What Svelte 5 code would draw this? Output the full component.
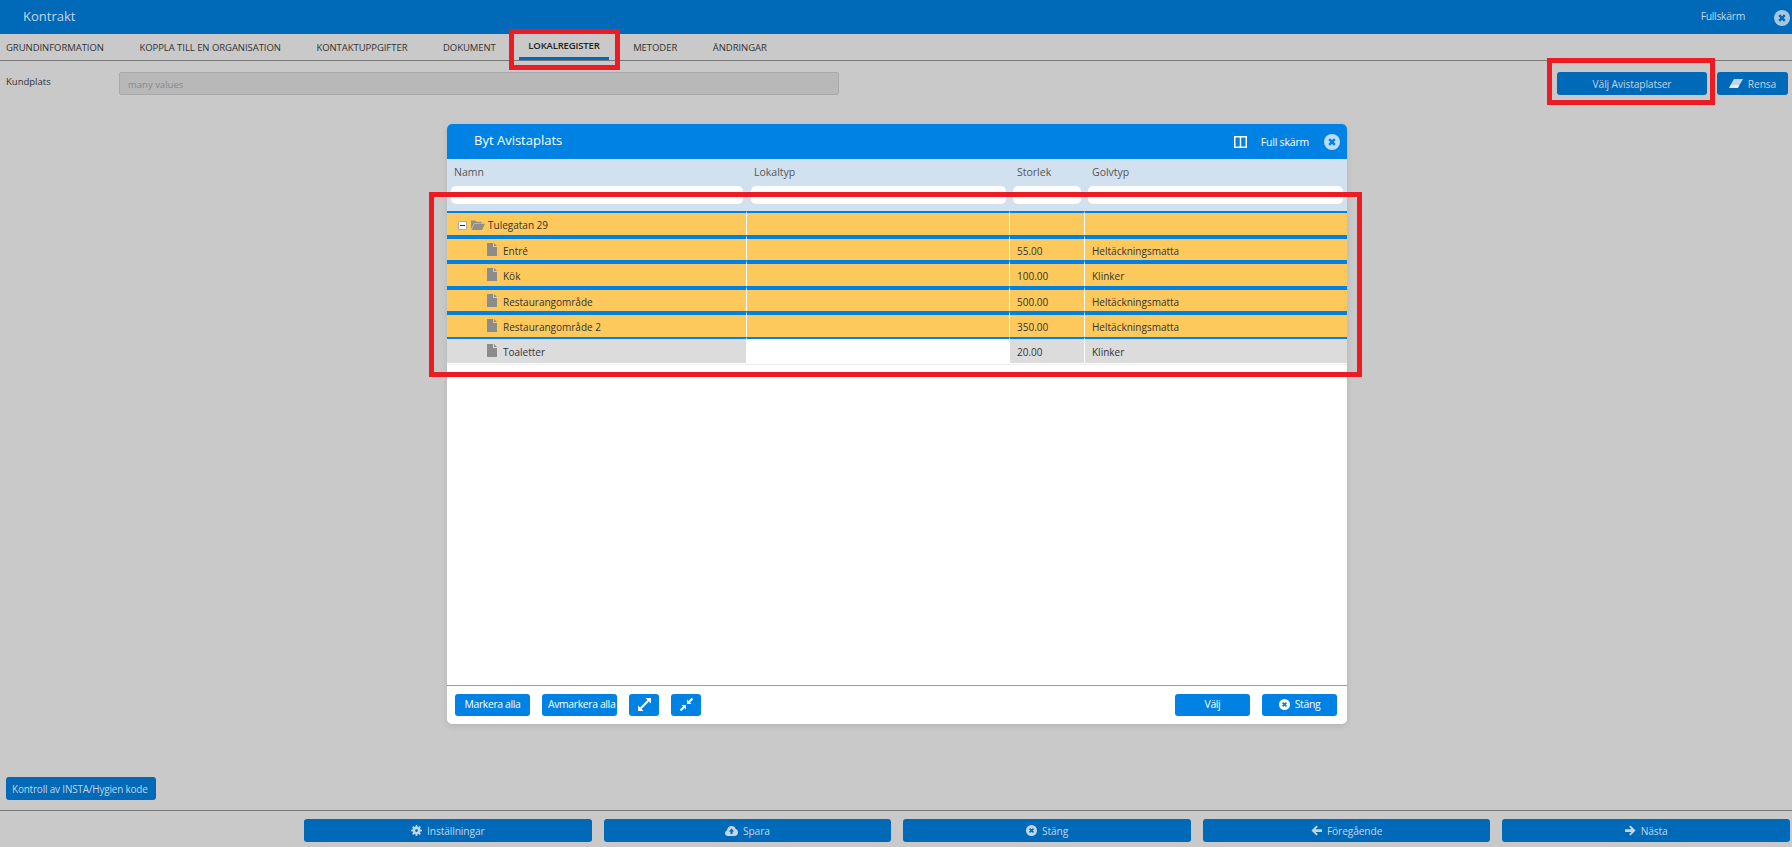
<script>
  const tabs = [
    "GRUNDINFORMATION",
    "KOPPLA TILL EN ORGANISATION",
    "KONTAKTUPPGIFTER",
    "DOKUMENT",
    "LOKALREGISTER",
    "METODER",
    "ÄNDRINGAR"
  ];

  const rows = [
    { name: "Entré", size: "55.00", floor: "Heltäckningsmatta" },
    { name: "Kök", size: "100.00", floor: "Klinker" },
    { name: "Restaurangområde", size: "500.00", floor: "Heltäckningsmatta" },
    { name: "Restaurangområde 2", size: "350.00", floor: "Heltäckningsmatta" }
  ];
</script>

{#snippet closeIcon(size, bg, fg)}
  <svg width={size} height={size} viewBox="0 0 16 16" class="icon close-icon">
    <circle cx="8" cy="8" r="8" fill={bg} />
    <path d="M5.2 5.2l5.6 5.6M10.8 5.2l-5.6 5.6" stroke={fg} stroke-width="2.4" />
  </svg>
{/snippet}

{#snippet fileIcon()}
  <svg width="10" height="13" viewBox="0 0 10 13" class="file-icon">
    <path d="M0 0h6v4h4v9H0z" fill="#8c8c8c" />
    <path d="M7 0l3 3H7z" fill="#8c8c8c" />
  </svg>
{/snippet}

<div class="page">
  <header class="topbar">
    <span class="title">Kontrakt</span>
    <span class="fullscreen">Fullskärm</span>
    {@render closeIcon(16, "#a9c6df", "#0069b8")}
  </header>

  <nav class="tabs">
    {#each tabs as tab, i}
      <span class="tab" class:active={i === 4}>{tab}</span>
    {/each}
  </nav>

  <div class="field-row">
    <span class="field-label">Kundplats</span>
    <div class="field-input">many values</div>
    <button class="btn btn-pick">Välj Avistaplatser</button>
    <button class="btn btn-clear">
      <svg width="14" height="9" viewBox="0 0 14 9" class="icon">
        <path d="M5 0h9l-3.500 6H1.500z" fill="#c3d6e8" />
        <path d="M1.500 6h9L9 9H0z" fill="#e3ecf4" />
      </svg>
      Rensa
    </button>
  </div>

  <div class="spacer">
    <button class="btn btn-check">Kontroll av INSTA/Hygien kode</button>
  </div>

  <footer class="actions">
    <button class="btn">
      <svg width="11" height="11" viewBox="0 0 12 12" class="icon">
        <circle cx="6" cy="6" r="3.2" fill="none" stroke="#c3d6e8" stroke-width="2.4" />
        <path d="M6 0v12M0 6h12M1.8 1.8l8.4 8.4M10.2 1.8l-8.4 8.4" stroke="#c3d6e8" stroke-width="1.8" />
        <circle cx="6" cy="6" r="1.5" fill="#0069b8" />
      </svg>
      Inställningar
    </button>
    <button class="btn">
      <svg width="13" height="11" viewBox="0 0 13 11" class="icon">
        <path d="M3 11C1.3 11 0 9.8 0 8.2 0 6.9.8 5.9 2 5.6 2.1 3.4 3.9 1 6.6 1c2 0 3.6 1.300 4.100 3.100 1.300.4 2.300 1.500 2.300 3.100C13 9.300 11.500 11 9.500 11z" fill="#c3d6e8" />
        <path d="M6.500 3.500L3.800 6.500h1.700V9h2V6.500h1.700z" fill="#0069b8" />
      </svg>
      Spara
    </button>
    <button class="btn">
      {@render closeIcon(11, "#c3d6e8", "#0069b8")}
      Stäng
    </button>
    <button class="btn">
      <svg width="11" height="11" viewBox="0 0 12 12" class="icon">
        <path d="M6 0.500L0.500 6 6 11.500 7.500 10 5 7.500h7v-3H5L7.500 2z" fill="#c3d6e8" />
      </svg>
      Föregående
    </button>
    <button class="btn">
      <svg width="11" height="11" viewBox="0 0 12 12" class="icon">
        <path d="M6 0.500L11.500 6 6 11.500 4.500 10 7 7.500H0v-3h7L4.500 2z" fill="#c3d6e8" />
      </svg>
      Nästa
    </button>
  </footer>

  <section class="modal">
    <div class="modal-head">
      <span class="modal-title">Byt Avistaplats</span>
      <svg width="13" height="12" viewBox="0 0 13 12" class="icon columns-icon">
        <path d="M.75.75h11.500v10.500H.75zM6.500.75v10.500" fill="none" stroke="#fff" stroke-width="1.500" />
      </svg>
      <span class="modal-full">Full skärm</span>
      {@render closeIcon(16, "#b9dcf7", "#0082e4")}
    </div>

    <div class="grid-head">
      <div class="cols labels">
        <span>Namn</span>
        <span>Lokaltyp</span>
        <span>Storlek</span>
        <span>Golvtyp</span>
      </div>
      <div class="filters">
        <div class="filter"></div>
        <div class="filter"></div>
        <div class="filter"></div>
        <div class="filter"></div>
      </div>
    </div>

    <div class="grid-body">
      <div class="cols row selected first">
        <div class="cell name">
          <span class="toggle"></span>
          <svg width="14" height="10" viewBox="0 0 16 11" preserveAspectRatio="none" class="folder-icon">
            <path d="M0 10V1.500C0 1 .4.500 1 .500h3.500L6 2h6v1.500H3.500L0 10z" fill="#8f8f8f" />
            <path d="M3.800 4.200H16L12.500 11H.6z" fill="#8f8f8f" />
          </svg>
          Tulegatan 29
        </div>
        <div class="cell"></div>
        <div class="cell"></div>
        <div class="cell"></div>
      </div>
      {#each rows as row}
        <div class="cols row selected">
          <div class="cell leaf">{@render fileIcon()}{row.name}</div>
          <div class="cell"></div>
          <div class="cell">{row.size}</div>
          <div class="cell">{row.floor}</div>
        </div>
      {/each}
      <div class="cols row plain last">
        <div class="cell leaf">{@render fileIcon()}Toaletter</div>
        <div class="cell empty"></div>
        <div class="cell">20.00</div>
        <div class="cell">Klinker</div>
      </div>
    </div>

    <div class="modal-foot">
      <button class="mbtn">Markera alla</button>
      <button class="mbtn clip">Avmarkera alla</button>
      <button class="mbtn small" aria-label="Expandera">
        <svg width="13" height="13" viewBox="0 0 13 13">
          <path d="M13 0v5.500L7.500 0zM0 13V7.500L5.500 13z" fill="#fff" />
          <path d="M10.200 2.800l-7.400 7.400" stroke="#fff" stroke-width="2.200" />
        </svg>
      </button>
      <button class="mbtn small" aria-label="Komprimera">
        <svg width="13" height="13" viewBox="0 0 13 13">
          <path d="M7 6V1.500L11.500 6zM6 7v4.500L1.500 7z" fill="#fff" />
          <path d="M9 4l3.500-3.500M4 9L.5 12.500" stroke="#fff" stroke-width="2.200" />
        </svg>
      </button>
      <span class="foot-gap"></span>
      <button class="mbtn">Välj</button>
      <button class="mbtn">
        {@render closeIcon(11, "#fff", "#0082e4")}
        Stäng
      </button>
    </div>
  </section>

  <div class="mark mark-tab"></div>
  <div class="mark mark-pick"></div>
  <div class="mark mark-table"></div>
</div>

<style>
  :global(body) {
    margin: 0;
    font-family: "Open Sans", "Noto Sans", sans-serif;
    color: #333;
  }

  .page {
    position: relative;
    display: flex;
    flex-direction: column;
    height: 847px;
    overflow: hidden;
    background: #c8c9c8;
  }

  .icon {
    flex: none;
    vertical-align: middle;
  }

  .btn {
    display: flex;
    flex: none;
    align-items: center;
    justify-content: center;
    gap: 5px;
    height: 23px;
    padding: 0;
    border: 0;
    border-radius: 3px;
    background: #0069b8;
    color: #c3d6e8;
    font: inherit;
    font-size: 10.2px;
    letter-spacing: -0.1px;
    white-space: nowrap;
  }

  .topbar {
    display: flex;
    align-items: center;
    flex: none;
    height: 34px;
    box-sizing: border-box;
    padding: 0 2px 2px 23px;
    background: #0069b8;
    color: #c3d6e8;
  }

  .title {
    flex: 1;
    font-size: 13px;
  }

  .fullscreen {
    margin-right: 29px;
    font-size: 10.4px;
    letter-spacing: -0.3px;
  }

  .topbar .close-icon {
    margin-top: 4px;
  }

  .tabs {
    display: flex;
    flex: none;
    gap: 35.5px;
    height: 26px;
    padding-left: 6px;
    border-bottom: 1px solid #777;
    font-size: 9.5px;
    letter-spacing: -0.05px;
    line-height: 27px;
  }

  .tab {
    white-space: nowrap;
  }

  .tab.active {
    margin-top: -2px;
    height: 28px;
    box-sizing: border-box;
    padding: 0 9px;
    margin-left: -12px;
    margin-right: -11px;
    border-bottom: 3px solid #0069b8;
    font-weight: 600;
    letter-spacing: -0.15px;
    color: #222;
  }

  .field-row {
    display: flex;
    align-items: flex-start;
    flex: none;
    padding: 11px 4px 0 6px;
  }

  .field-label {
    flex: none;
    width: 113px;
    font-size: 9.5px;
    line-height: 20px;
  }

  .field-input {
    flex: none;
    width: 720px;
    height: 23px;
    box-sizing: border-box;
    border: 1px solid #a9a9a9;
    border-radius: 2px;
    padding-left: 8px;
    background: #b8b8b8;
    color: #888;
    font-size: 9.5px;
    line-height: 23px;
  }

  .btn-pick {
    width: 150px;
    margin-left: 718px;
  }

  .btn-clear {
    width: 71px;
    margin-left: 10px;
  }

  .spacer {
    display: flex;
    align-items: flex-end;
    flex: 1;
    padding: 0 0 10px 6px;
    border-bottom: 1px solid #777;
  }

  .btn-check {
    width: 150px;
    justify-content: flex-start;
    padding-left: 6px;
    font-size: 9.9px;
    letter-spacing: -0.15px;
  }

  .actions {
    display: grid;
    flex: none;
    grid-template-columns: repeat(5, 1fr);
    gap: 12px;
    height: 36px;
    box-sizing: border-box;
    padding: 8px 2px 5px 304px;
  }

  .modal {
    position: absolute;
    top: 124px;
    left: 447px;
    display: flex;
    flex-direction: column;
    width: 900px;
    height: 600px;
    border-radius: 5px;
    background: #fff;
    box-shadow: 0 2px 6px rgba(0, 0, 0, 0.1);
    overflow: hidden;
  }

  .modal-head {
    display: flex;
    align-items: center;
    flex: none;
    height: 35px;
    padding: 0 7px 0 27px;
    background: #0082e4;
    color: #fff;
  }

  .modal-title {
    flex: 1;
    margin-top: -3px;
    font-size: 13px;
  }

  .columns-icon {
    margin-right: 14px;
  }

  .modal-full {
    margin-right: 15px;
    font-size: 10.5px;
    letter-spacing: -0.2px;
  }

  .cols {
    display: grid;
    grid-template-columns: 300px 263px 75px 262px;
  }

  .grid-head {
    flex: none;
    height: 52px;
    background: #d2e1ef;
  }

  .labels {
    height: 27px;
    color: #555;
    font-size: 10.5px;
    line-height: 26px;
  }

  .labels span {
    padding-left: 7px;
  }

  .filters {
    display: grid;
    grid-template-columns: 292px 256px 68px 255px;
    column-gap: 7px;
    padding-left: 4px;
  }

  .filter {
    height: 18px;
    border-radius: 5px;
    background: #fff;
  }

  .filter:nth-child(2) {
    margin-left: 1px;
  }

  .grid-body {
    flex: none;
    height: 153px;
    border-bottom: 1px solid #eee;
    color: #333;
    font-size: 10px;
  }

  .row:nth-child(even) {
    height: 25px;
  }

  .row:nth-child(odd) {
    height: 26px;
  }

  .row.first {
    height: 24px;
  }

  .row.last {
    height: 26px;
  }

  .cell {
    display: flex;
    align-items: center;
    box-sizing: border-box;
    height: 100%;
    padding-top: 2px;
    padding-left: 7px;
    border-top: 4px solid #0082e4;
    border-right: 1px solid #fff;
    white-space: nowrap;
  }

  .cell:last-child {
    border-right: 0;
  }

  .first .cell,
  .last .cell {
    border-top-width: 2px;
  }

  .selected .cell {
    background: #fec95c;
  }

  .plain .cell {
    background: #dcdcdc;
  }

  .plain .cell.empty {
    background: #fff;
  }

  .cell.name {
    padding-left: 11px;
  }

  .cell.leaf {
    padding-left: 40px;
  }

  .toggle {
    position: relative;
    box-sizing: border-box;
    width: 9px;
    height: 9px;
    margin-right: 4px;
    border: 1px solid #aaa;
    border-radius: 1px;
    background: #fff;
  }

  .toggle::after {
    content: "";
    position: absolute;
    left: 1px;
    right: 1px;
    top: 3px;
    height: 1px;
    background: #333;
  }

  .folder-icon {
    margin-right: 3px;
  }

  .file-icon {
    margin-right: 6px;
    margin-top: -3px;
  }

  .modal-foot {
    display: flex;
    flex: none;
    align-items: flex-start;
    gap: 12px;
    margin-top: auto;
    height: 39px;
    box-sizing: border-box;
    padding: 8px 10px 0 8px;
    border-top: 1px solid #999;
  }

  .mbtn {
    display: flex;
    align-items: center;
    justify-content: center;
    gap: 5px;
    width: 75px;
    height: 22px;
    padding: 0 0 2px;
    border: 0;
    border-radius: 3px;
    background: #0082e4;
    color: #fff;
    font: inherit;
    font-size: 10.4px;
    letter-spacing: -0.35px;
    white-space: nowrap;
  }

  .mbtn.clip {
    justify-content: flex-start;
    padding-left: 6px;
  }

  .mbtn.small {
    width: 30px;
  }

  .foot-gap {
    flex: 1;
  }

  .mark {
    position: absolute;
    border: 5px solid #ed1c24;
    box-sizing: border-box;
    pointer-events: none;
  }

  .mark-tab {
    top: 29px;
    left: 509px;
    width: 111px;
    height: 41px;
  }

  .mark-pick {
    top: 58px;
    left: 1547px;
    width: 168px;
    height: 47px;
  }

  .mark-table {
    top: 192px;
    left: 429px;
    width: 933px;
    height: 185px;
  }
</style>
